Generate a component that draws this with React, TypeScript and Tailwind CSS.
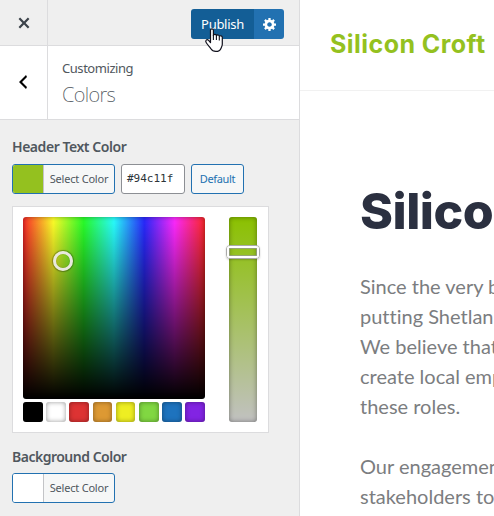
import React from "react";

const swatches = [
  "bg-black",
  "bg-white",
  "bg-[#dd3333]",
  "bg-[#dd9933]",
  "bg-[#eeee22]",
  "bg-[#81d742]",
  "bg-[#1e73be]",
  "bg-[#8224e3]",
];

function Header() {
  return (
    <header className="flex h-[46px] shrink-0 border-b border-[#dcdcde]">
      <button aria-label="Close" className="flex w-12 items-center justify-center border-r border-[#dcdcde] text-[#3c434a]">
        <svg width="22" height="22" viewBox="0 0 20 20" fill="currentColor">
          <path d="M14.95 6.46L11.41 10l3.54 3.54-1.41 1.41L10 11.42l-3.53 3.53-1.42-1.42L8.58 10 5.05 6.47l1.42-1.42L10 8.58l3.54-3.53z" />
        </svg>
      </button>
      <div className="relative ml-auto mr-[15px] mt-[9px] flex h-[30px] text-white">
        <button className="w-[63px] whitespace-nowrap rounded-l-[3px] bg-[#135e96] text-[13px] leading-[30px] tracking-[-0.3px]">Publish</button>
        <button aria-label="Publish settings" className="flex w-[30px] items-center justify-center rounded-r-[3px] bg-[#2271b1]">
          <svg width="13" height="13" viewBox="1 2 17 17" fill="currentColor">
            <path d="M18 12h-2.18c-.17.7-.44 1.35-.81 1.93l1.54 1.54-2.1 2.1-1.54-1.54c-.58.36-1.23.63-1.91.79V19H8v-2.18c-.68-.16-1.33-.43-1.91-.79l-1.54 1.54-2.12-2.12 1.54-1.54c-.36-.58-.63-1.23-.79-1.91H1V9.03h2.17c.16-.7.44-1.35.8-1.94L2.43 5.55l2.1-2.1 1.54 1.54c.58-.37 1.24-.64 1.93-.81V2h3v2.18c.68.16 1.33.43 1.91.79l1.54-1.54 2.12 2.12-1.54 1.54c.36.59.64 1.24.8 1.94H18V12zm-8.5 1.5c1.66 0 3-1.34 3-3s-1.34-3-3-3-3 1.34-3 3 1.34 3 3 3z" />
          </svg>
        </button>
        <svg className="absolute left-[13px] top-[19px] z-10" width="20" height="24" viewBox="0 0 20 24">
          <path
            d="M6.5 14.5V2.2C6.5.3 9.4.3 9.4 2.2v5.3c.3-1.5 3-1.4 3 .3.5-1.3 2.9-1 2.9.6.6-1.1 3-.7 3 1v6.9c0 2-1 3-1.5 4.4-.7 1.9-2.6 2.7-4.9 2.7-2.6 0-4-.9-5-2.7-1.1-2-2.9-3.2-4.6-5.9-1.6-2.5.6-3.9 2.3-2.4z"
            fill="#fff"
            stroke="#10101c"
            strokeWidth="1.2"
            strokeLinejoin="round"
          />
          <path d="M9.4 7v5M12.4 8v4M15.3 9v3.5" fill="none" stroke="#10101c" strokeWidth="1.1" />
        </svg>
      </div>
    </header>
  );
}

function SectionTitle() {
  return (
    <div className="flex h-[74px] shrink-0 border-b border-[#dcdcde] bg-white">
      <button aria-label="Back" className="flex w-12 items-center justify-center border-r border-[#dcdcde] pb-[2px] pr-[2px] text-black">
        <svg width="20" height="20" viewBox="0 0 20 20" fill="currentColor">
          <path d="M14 5l-5 5 5 5-1 2-7-7 7-7z" />
        </svg>
      </button>
      <div className="pl-[14px] pt-[12px] text-[#50575e]">
        <div className="text-[13px] leading-5 tracking-[-0.45px]">Customizing</div>
        <h3 className="mt-[4px] text-[20px] font-extralight leading-[26px] tracking-[-0.6px]">Colors</h3>
      </div>
    </div>
  );
}

function SelectColor({ swatch }: { swatch: string }) {
  return (
    <button className="flex h-[30px] w-[103px] overflow-hidden rounded-[3px] border border-[#2271b1] bg-[#f6f7f7]">
      <span className={`h-full w-[30px] shrink-0 ${swatch}`} />
      <span className="h-full flex-1 whitespace-nowrap border-l border-[#c3c4c7] text-center text-[11px] leading-[28px] tracking-[-0.2px] text-[#50575e]">
        Select Color
      </span>
    </button>
  );
}

function Picker() {
  return (
    <div className="mt-3 flex h-[227px] w-[257px] justify-between border border-[#dcdcde] bg-white py-[10px] pl-[10px] pr-[11px]">
      <div className="flex w-[182px] flex-col gap-[3px]">
        <div className="relative h-[182px] rounded-[3px] bg-[linear-gradient(to_bottom,transparent,#000),linear-gradient(to_right,#ff2929,#ffff29,#29ff29,#29ffff,#2929ff,#ff29ff,#ff2929)] shadow-[inset_0_0_5px_rgba(0,0,0,0.4)]">
          <div className="absolute left-[30px] top-[34px] h-5 w-5 rounded-full border-[3px] border-[#e8e8de] shadow-[0_0_1px_1px_rgba(0,0,0,0.3),inset_0_0_1px_rgba(0,0,0,0.4)]" />
        </div>
        <div className="flex justify-between">
          {swatches.map((c) => (
            <span key={c} className={`h-5 w-[19.6px] rounded-[3px] shadow-[inset_0_0_5px_rgba(0,0,0,0.4)] ${c}`} />
          ))}
        </div>
      </div>
      <div className="relative h-[205px] w-7 rounded-[3px] bg-[linear-gradient(to_bottom,#8bc100,#c1c1c1)] shadow-[inset_0_0_5px_rgba(0,0,0,0.4)]">
        <div className="absolute -left-[3px] top-[28px] h-[14px] w-[34px] rounded-[4px] border border-[#aaa] shadow-[0_1px_2px_rgba(0,0,0,0.2)]">
          <div className="h-full w-full rounded-[3px] border-2 border-white">
            <div className="h-full w-full border border-[#999]/70" />
          </div>
        </div>
      </div>
    </div>
  );
}

export default function App() {
  return (
    <div className="flex h-[516px] w-[494px] overflow-hidden bg-white">
      <aside className="flex w-[300px] shrink-0 flex-col border-r border-[#dcdcde] bg-[#efefef] font-['Noto_Sans',sans-serif]">
        <Header />
        <SectionTitle />
        <div className="px-3 pt-[15px]">
          <h4 className="mb-[5px] text-[14px] font-semibold leading-6 tracking-[-0.45px] text-[#50575e]">Header Text Color</h4>
          <div className="flex gap-[6px]">
            <SelectColor swatch="bg-[#94c11f]" />
            <div className="h-[30px] w-16 rounded-[3px] border border-[#8c8f94] bg-white pl-[5px] font-['DejaVu_Sans_Mono',monospace] text-[11px] leading-[28px] text-[#2c3338]">#94c11f</div>
            <button className="h-[30px] w-[53px] rounded-[3px] border border-[#2271b1] bg-[#f6f7f7] text-[11px] leading-[28px] tracking-[-0.35px] text-[#2271b1]">Default</button>
          </div>
          <Picker />
          <h4 className="mb-[4px] mt-[12px] text-[14px] font-semibold leading-6 tracking-[-0.5px] text-[#50575e]">Background Color</h4>
          <SelectColor swatch="bg-white" />
        </div>
      </aside>
      <main className="w-[194px] overflow-hidden">
        <div className="flex h-[91px] items-center border-b border-[#f1f1f1] pl-[30px]">
          <span className="whitespace-nowrap font-['Inter',sans-serif] text-[25px] font-bold tracking-[0.45px] text-[#94c11f]">Silicon Croft</span>
        </div>
        <div className="pl-[60px]">
          <h1 className="mt-[90px] whitespace-nowrap font-['Inter',sans-serif] text-[50px] font-extrabold leading-[60px] tracking-[-0.5px] text-[#2b3040]">Silico</h1>
          <div className="mt-[30px] whitespace-nowrap font-['Lato',sans-serif] text-[20px] leading-[30px] text-[#7b7d80] [font-variant-ligatures:none]">
            <p>
              Since the very b<br />
              putting Shetlan<br />
              We believe that<br />
              create local emp<br />
              these roles.
            </p>
            <p className="mt-[30px]">
              Our engagemen<br />
              stakeholders to
            </p>
          </div>
        </div>
      </main>
    </div>
  );
}
